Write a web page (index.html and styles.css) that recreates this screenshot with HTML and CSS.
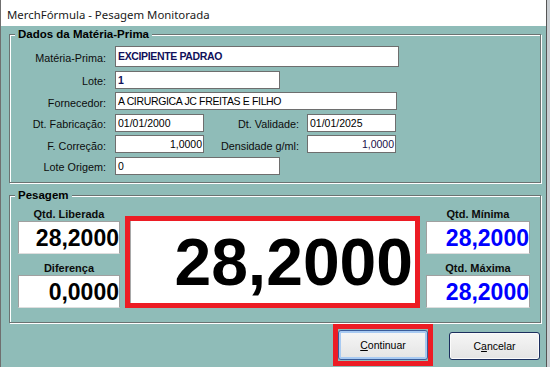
FILE: index.html
```html
<!DOCTYPE html>
<html lang="pt">

<head>
  <meta charset="utf-8">
  <title>MerchFórmula - Pesagem Monitorada</title>
  <link rel="stylesheet" href="styles.css">
</head>

<body>
  <div class="window">
    <div class="titlebar">MerchFórmula - Pesagem Monitorada</div>
    <div class="client">
      <!-- dados da matéria-prima -->
      <div class="group group-dados">
        <div class="legend">Dados da Matéria-Prima</div>
        <div class="rows">
          <div class="row row-first">
            <span class="label">Matéria-Prima:</span>
            <span class="field field-mp strong caps">EXCIPIENTE PADRAO</span>
          </div>
          <div class="row">
            <span class="label">Lote:</span>
            <span class="field field-lote strong">1</span>
          </div>
          <div class="row">
            <span class="label">Fornecedor:</span>
            <span class="field field-forn caps">A CIRURGICA JC FREITAS E FILHO</span>
          </div>
          <div class="row">
            <span class="label">Dt. Fabricação:</span>
            <span class="field field-short">01/01/2000</span>
            <span class="label label-2">Dt. Validade:</span>
            <span class="field field-short">01/01/2025</span>
          </div>
          <div class="row">
            <span class="label">F. Correção:</span>
            <span class="field field-short num">1,0000</span>
            <span class="label label-2">Densidade g/ml:</span>
            <span class="field field-short num navy">1,0000</span>
          </div>
          <div class="row">
            <span class="label">Lote Origem:</span>
            <span class="field field-lote">0</span>
          </div>
        </div>
      </div>

      <!-- pesagem -->
      <div class="group group-pesagem">
        <div class="legend">Pesagem</div>
        <div class="pes-row">
          <div class="qcol">
            <div class="qlabel">Qtd. Liberada</div>
            <div class="qbox">28,2000</div>
            <div class="qlabel qlabel-2">Diferença</div>
            <div class="qbox">0,0000</div>
          </div>
          <div class="big">28,2000</div>
          <div class="qcol qcol-right">
            <div class="qlabel">Qtd. Mínima</div>
            <div class="qbox blue">28,2000</div>
            <div class="qlabel qlabel-2">Qtd. Máxima</div>
            <div class="qbox blue">28,2000</div>
          </div>
        </div>
      </div>

      <!-- botões -->
      <div class="buttons">
        <div class="focus-mark">
          <button class="btn btn-default"><u>C</u>ontinuar</button>
        </div>
        <button class="btn btn-cancel">C<u>a</u>ncelar</button>
      </div>
    </div>
  </div>
</body>

</html>
```

FILE: styles.css
```css
* {
  box-sizing: border-box;
}

body {
  margin: 0;
  background: #c9ced2;
  font-family: "Liberation Sans", Arial, sans-serif;
  color: #000;
}

.window {
  width: 547px;
  height: 367px;
  border-left: 1px solid #6f6f6f;
  border-right: 1px solid #555;
  background: #8fbcb8;
}

.titlebar {
  height: 26px;
  background: #fff;
  padding-left: 6px;
  font-family: "Noto Sans", "Open Sans", sans-serif;
  font-size: 11.4px;
  line-height: 29px;
  color: #1a1a1a;
}

.client {
  padding: 8px 0 0 8px;
}

/* caixas de grupo com borda "etched" */
.group {
  width: 532px;
  border: 1px solid #6b7372;
  box-shadow: inset 1px 1px 0 #fff, 1px 1px 0 #fff;
}

.group-dados {
  height: 149px;
}

.group-pesagem {
  height: 128px;
  margin-top: 12px;
}

.legend {
  width: max-content;
  margin: -8px 0 0 5px;
  padding: 0 3px;
  background: #8fbcb8;
  font-size: 11.5px;
  font-weight: bold;
  line-height: 14px;
}

.rows {
  display: flex;
  flex-direction: column;
  gap: 3.5px;
  margin-top: 5px;
}

.row {
  display: flex;
  align-items: center;
  height: 18px;
}

.row-first {
  height: 21px;
}

.label {
  width: 96px;
  margin-right: 9px;
  padding-top: 3px;
  text-align: right;
  font-size: 10.8px;
  color: #0c0c0c;
}

.label-2 {
  width: 95px;
  margin-right: 8px;
}

.field {
  height: 18px;
  border: 1px solid #6e6e6e;
  background: #fff;
  padding: 0 2px;
  font-size: 10.5px;
  line-height: 16px;
  color: #000;
  white-space: nowrap;
}

.row-first .field {
  height: 21px;
  line-height: 19px;
}

.field-mp {
  width: 284px;
}

.field-lote {
  width: 165px;
}

.field-forn {
  width: 282px;
}

.field-short {
  width: 89px;
}

.strong {
  font-weight: bold;
  color: #10105a;
}

.caps {
  letter-spacing: -0.35px;
}

.num {
  text-align: right;
  padding-right: 1px;
}

.navy {
  color: #1a1048;
}

/* área de pesagem */
.pes-row {
  display: flex;
  align-items: flex-end;
  margin: 5px 0 0 8px;
}

.qcol {
  display: flex;
  flex-direction: column;
  width: 102px;
}

.qcol-right {
  width: 104px;
  margin-left: 6px;
}

.qlabel {
  height: 14px;
  line-height: 14px;
  text-align: center;
  font-size: 11px;
  font-weight: bold;
  color: #0c0c0c;
}

.qlabel-2 {
  margin-top: 7px;
}

.qbox {
  height: 33px;
  border: 1px solid;
  border-color: #a0a0a0 #a0a0a0 #dedede #a0a0a0;
  background: #fff;
  text-align: right;
  font-size: 23px;
  font-weight: bold;
  line-height: 33px;
  color: #000;
}

.blue {
  color: #0000ff;
}

.big {
  width: 295px;
  height: 92px;
  margin-left: 5px;
  border: 5px solid #ec1c24;
  background: #fff;
  box-shadow: inset 1px 0 0 #a8a8a8;
  padding-right: 2px;
  text-align: right;
  font-size: 66px;
  font-weight: bold;
  line-height: 82px;
  color: #000;
}

/* botões */
.buttons {
  display: flex;
  justify-content: flex-end;
  align-items: center;
  gap: 16px;
  margin: 1px 6px 0 0;
}

.focus-mark {
  width: 100px;
  height: 42px;
  border: 5px solid #ec1c24;
  padding-top: 1px;
}

.btn {
  font-family: "Liberation Sans", Arial, sans-serif;
  font-size: 10.5px;
  color: #000;
  border-radius: 3px;
  padding: 0;
  background: linear-gradient(#f6f6f6, #e4e4e4);
}

.btn-default {
  width: 90px;
  height: 30px;
  border: 1px solid #3a5c9a;
  box-shadow: inset 0 0 0 2px #a8caf2;
}

.btn-cancel {
  width: 91px;
  height: 28px;
  margin-top: 2px;
  border: 1px solid #1c2e5e;
  box-shadow: inset 0 0 0 1px #fbfbfb;
}
```
